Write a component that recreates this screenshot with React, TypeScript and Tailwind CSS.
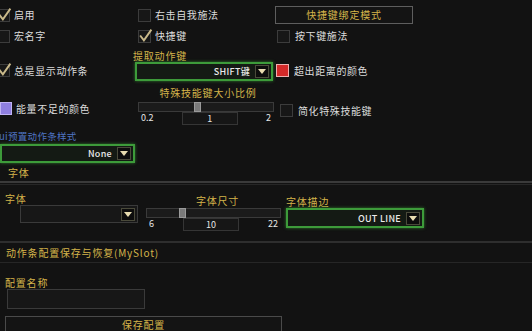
import React from 'react'

const font = { fontFamily: '"Noto Sans CJK SC", "Noto Sans", sans-serif' }

function Check({ checked = false }: { checked?: boolean }) {
  return (
    <div className="relative w-[13px] h-[13px] shrink-0 border border-[#3c3c3c] bg-[#171717]">
      {checked && (
        <svg viewBox="0 0 14 14" className="absolute left-[-1px] top-[-3px] w-[15px] h-[15px]">
          <path d="M2 7 L5.5 11.5 L12.5 1.5" fill="none" stroke="#c9b98a" strokeWidth="1.8" />
        </svg>
      )}
    </div>
  )
}

function Label({ children, className = '' }: { children: React.ReactNode; className?: string }) {
  return <span className={`block text-[10px] tracking-[0.6px] text-[#dcdcdc] leading-none ${className}`}>{children}</span>
}

function Gold({ children, className = '' }: { children: React.ReactNode; className?: string }) {
  return <span className={`block text-[10px] tracking-[0.8px] text-[#d4b44a] leading-none ${className}`}>{children}</span>
}

function Arrow() {
  return (
    <div className="w-[14px] h-[13px] flex items-center justify-center bg-[#0d0d0d] border border-[#4a4a3a]">
      <svg viewBox="0 0 10 6" className="w-[8px] h-[5px]">
        <path d="M0 0 H10 L5 6 Z" fill="#e8dcb0" />
      </svg>
    </div>
  )
}

function Dropdown({ value, green = true, className = '' }: { value: string; green?: boolean; className?: string }) {
  return (
    <div
      className={`flex items-center justify-end gap-[5px] pr-[2px] ${
        green
          ? 'border-2 border-[#3d9b3a] bg-[#141a14] shadow-[0_0_3px_#2f7a2c]'
          : 'border border-[#3a3a3a] bg-[#171717]'
      } ${className}`}
    >
      <span className="text-[9px] font-medium tracking-[0.3px] text-[#eaeaea] leading-none">{value}</span>
      <Arrow />
    </div>
  )
}

function Slider({ min, max, value, thumb, className = '' }: { min: string; max: string; value: string; thumb: number; className?: string }) {
  return (
    <div className={`flex flex-col ${className}`}>
      <div className="relative h-[10px] border border-[#3a3a3a] bg-[#1b1b1b]">
        <div className="absolute top-[-1px] h-[10px] w-[7px] bg-[#7a7a7a] border border-[#9a9a9a]" style={{ left: thumb }} />
      </div>
      <div className="flex items-start justify-between px-[3px]">
        <span className="text-[9px] text-[#e6e6e6] leading-[12px]">{min}</span>
        <div className="w-[56px] h-[13px] border border-[#353535] bg-[#161616] flex items-center justify-center">
          <span className="text-[9px] text-[#e6e6e6] leading-none">{value}</span>
        </div>
        <span className="text-[9px] text-[#e6e6e6] leading-[12px]">{max}</span>
      </div>
    </div>
  )
}

export default function App() {
  return (
    <div className="w-[532px] h-[331px] bg-[#121212] overflow-hidden leading-none" style={font}>
      {/* top options */}
      <div className="flex flex-col pt-[6px]">
        {/* row 1 */}
        <div className="flex h-[18px] items-center">
          <div className="w-[138px] flex items-center gap-[4px] ml-[-3px]">
            <Check checked />
            <Label>启用</Label>
          </div>
          <div className="w-[140px] flex items-center gap-[4px] pl-[3px]">
            <Check />
            <Label>右击自我施法</Label>
          </div>
          <div className="w-[138px] h-[18px] border border-[#5e5e5e] bg-[#141414] flex items-center justify-center">
            <Gold>快捷键绑定模式</Gold>
          </div>
        </div>

        {/* row 2 */}
        <div className="flex h-[16px] items-center mt-[4px]">
          <div className="w-[138px] flex items-center gap-[4px] ml-[-3px]">
            <Check />
            <Label>宏名字</Label>
          </div>
          <div className="w-[140px] flex items-center gap-[4px] pl-[3px]">
            <Check checked />
            <Label>快捷键</Label>
          </div>
          <div className="flex items-center gap-[5px] pl-[2px]">
            <Check />
            <Label>按下键施法</Label>
          </div>
        </div>

        {/* row 3 */}
        <div className="flex h-[31px] mt-[6px]">
          <div className="w-[136px] flex items-end gap-[4px] ml-[-3px] pb-[4px]">
            <Check checked />
            <Label className="mb-[1px]">总是显示动作条</Label>
          </div>
          <div className="w-[142px] flex flex-col">
            <Gold className="h-[12px] pt-[1px]">提取动作键</Gold>
            <Dropdown value="SHIFT键" className="h-[19px] w-[138px] ml-[2px]" />
          </div>
          <div className="flex items-end gap-[5px] pl-[1px] pb-[4px]">
            <div className="w-[13px] h-[13px] bg-[#d42a2a] border border-[#f0b0b0]" />
            <Label className="mb-[1px]">超出距离的颜色</Label>
          </div>
        </div>

        {/* row 4 */}
        <div className="flex h-[39px] mt-[5px]">
          <div className="w-[138px] flex items-start gap-[4px] pt-[16px]">
            <div className="w-[12px] h-[13px] bg-[#8f7fe0] border border-[#c0b4f4]" />
            <Label className="mt-[2px]">能量不足的颜色</Label>
          </div>
          <div className="w-[140px] flex flex-col">
            <Gold className="h-[16px] pt-[2px] text-center">特殊技能键大小比例</Gold>
            <Slider min="0.2" max="2" value="1" thumb={55} className="w-[136px]" />
          </div>
          <div className="flex items-start gap-[5px] pl-[2px] pt-[18px]">
            <Check />
            <Label className="mt-[2px]">简化特殊技能键</Label>
          </div>
        </div>

        {/* row 5 */}
        <div className="flex flex-col mt-[6px] w-[136px]">
          <span className="block text-[9.5px] tracking-[0.3px] text-[#4f74c2] leading-none h-[13px] pt-[1px] ml-[-1px]">ui预置动作条样式</span>
          <Dropdown value="None" className="h-[19px] w-[135px]" />
        </div>
      </div>

      {/* font section */}
      <div className="mt-[5px] pl-[8px] h-[13px]">
        <Gold>字体</Gold>
      </div>
      <div className="border-t-2 border-[#3a3a3a] border-b border-b-[#262626] h-[4px]" />

      <div className="flex mt-[9px] h-[40px]">
        <div className="w-[146px] flex flex-col pl-[5px]">
          <Gold className="h-[11px]">字体</Gold>
          <Dropdown value="" green={false} className="h-[18px] w-[118px] ml-[15px]" />
        </div>
        <div className="w-[135px] flex flex-col">
          <Gold className="h-[14px] pt-[2px] text-center pl-[8px]">字体尺寸</Gold>
          <Slider min="6" max="22" value="10" thumb={32} className="w-[135px]" />
        </div>
        <div className="flex flex-col pl-[5px]">
          <Gold className="h-[11px] mt-[3px]">字体描边</Gold>
          <Dropdown value="OUT LINE" className="h-[20px] w-[138px]" />
        </div>
      </div>

      {/* save section */}
      <div className="border-t-2 border-[#2e2e2e] mt-[7px]" />
      <div className="h-[19px] pl-[6px] flex items-center">
        <Gold className="tracking-[0.5px]">动作条配置保存与恢复(MySlot)</Gold>
      </div>
      <div className="border-t border-[#262626]" />
      <div className="flex flex-col pl-[5px] pt-[15px]">
        <Gold className="h-[11px]">配置名称</Gold>
        <div className="w-[138px] h-[20px] border border-[#3a3a3a] bg-[#171717] ml-[2px]" />
        <div className="w-[277px] h-[18px] mt-[7px] border border-[#4a4a4a] bg-[#141414] flex items-center justify-center">
          <Gold>保存配置</Gold>
        </div>
      </div>
    </div>
  )
}
